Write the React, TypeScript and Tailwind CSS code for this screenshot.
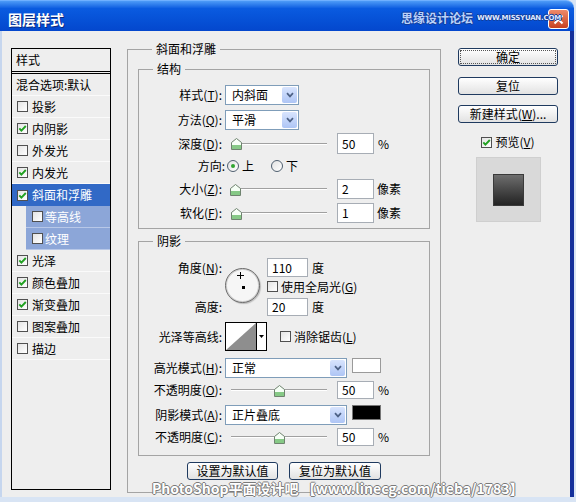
import React from "react";

type Item = { t: string; on: boolean; sel?: boolean; sub?: boolean };

const styleItems: Item[] = [
  { t: "投影", on: false },
  { t: "内阴影", on: true },
  { t: "外发光", on: false },
  { t: "内发光", on: true },
  { t: "斜面和浮雕", on: true, sel: true },
  { t: "等高线", on: false, sub: true },
  { t: "纹理", on: false, sub: true },
  { t: "光泽", on: true },
  { t: "颜色叠加", on: true },
  { t: "渐变叠加", on: true },
  { t: "图案叠加", on: false },
  { t: "描边", on: false },
];

function Check({ on }: { on?: boolean }) {
  return (
    <span className="w-[11px] h-[11px] shrink-0 border border-[#505050] bg-linear-to-br from-[#e4e4e4] to-white flex items-center justify-center">
      {on && (
        <svg width="9" height="9" viewBox="0 0 9 9">
          <path d="M1.3 4.3 L3.4 6.6 L7.8 2" stroke="#21a121" strokeWidth="1.9" fill="none" />
        </svg>
      )}
    </span>
  );
}

function Radio({ on }: { on?: boolean }) {
  return (
    <span className="w-[12px] h-[12px] shrink-0 rounded-full border border-[#4f5f6f] bg-linear-to-br from-[#e2e2e2] to-white flex items-center justify-center">
      {on && <span className="w-[4px] h-[4px] rounded-full bg-[#31a531]" />}
    </span>
  );
}

function Select({ value, w }: { value: string; w: string }) {
  return (
    <div className={`${w} h-[20px] bg-white border border-[#7f9db9] flex items-center justify-between pl-[6px] pr-[1px]`}>
      <span>{value}</span>
      <span className="w-[15px] h-[16px] rounded-[2px] bg-linear-to-b from-[#d8e4fd] to-[#aec5f5] flex items-center justify-center">
        <svg width="8" height="6" viewBox="0 0 8 6">
          <path d="M1 1.2 L4 4.4 L7 1.2" stroke="#4d6185" strokeWidth="1.7" fill="none" />
        </svg>
      </span>
    </div>
  );
}

function Field({ v, w = "w-[37px]", h = "h-[20px]" }: { v: string; w?: string; h?: string }) {
  return <div className={`${w} ${h} bg-white border border-[#a7adb5] flex items-center pl-[4px]`}>{v}</div>;
}

function Slider({ pos }: { pos: string }) {
  return (
    <div className="relative w-[100px] h-[17px] flex items-center ml-[6px]">
      <div className="ml-[3px] w-[96px] h-[2px] border-t border-[#a0a0a0] border-b border-b-white" />
      <svg className={`absolute top-[3px] ${pos}`} width="11" height="12" viewBox="0 0 11 12">
        <path d="M0.5 4.5 L5.5 0.5 L10.5 4.5 V11.5 H0.5 Z" fill="#f6fff6" stroke="#6f836f" />
        <rect x="1" y="7" width="9" height="4" fill="#86c986" />
      </svg>
    </div>
  );
}

function Btn({ children, def }: { children: React.ReactNode; def?: boolean }) {
  return (
    <div className="w-full h-[18px] rounded-[3px] border border-[#1f3a5f] bg-linear-to-b from-white to-[#e2e2e2] flex items-center justify-center p-[1px]">
      <span className={def ? "w-full h-full border border-dotted border-[#555] flex items-center justify-center" : "flex items-center justify-center"}>
        {children}
      </span>
    </div>
  );
}

function Row({ label, lw = "w-[83px]", h = "h-[20px]", mt, children }: { label: React.ReactNode; lw?: string; h?: string; mt: string; children: React.ReactNode }) {
  return (
    <div className={`flex items-center ${h} ${mt}`}>
      <span className={`${lw} text-right shrink-0`}>{label}</span>
      {children}
    </div>
  );
}

function Legend({ children }: { children: React.ReactNode }) {
  return <legend className="ml-[14px] px-[4px] leading-[16px]">{children}</legend>;
}

export default function App() {
  return (
    <div className="w-[576px] h-[502px] bg-[#d8e4f4] overflow-hidden relative font-['Noto_Sans_CJK_SC','Noto_Sans',sans-serif] text-[12px] leading-[16px] text-black">
      <div className="w-[574px] h-[497px] flex flex-col">
        {/* title bar */}
        <div className="h-[31px] shrink-0 rounded-tr-[8px] bg-linear-to-b from-[#4d9bf7] via-[#0a5be0] via-25% to-[#0447cd] border-t border-[#6fb0ff] flex items-center justify-between pl-[8px] pr-[5px]">
          <span className="text-white font-bold text-[14px] pt-[5px] [text-shadow:1px_1px_0_#0a2a80]">图层样式</span>
          <span className="w-[21px] h-[20px] mt-[6px] rounded-[3px] border border-white bg-linear-to-b from-[#ee8a6a] to-[#c8401d] flex items-center justify-center">
            <svg width="11" height="11" viewBox="0 0 11 11">
              <path d="M1.5 1.5 L9.5 9.5 M9.5 1.5 L1.5 9.5" stroke="white" strokeWidth="2" />
            </svg>
          </span>
        </div>

        {/* body */}
        <div className="flex-1 flex items-start bg-[#eeeeee] border-l-2 border-l-[#c6d6ee] border-r-4 border-r-[#15309b] pl-[9px] pt-[10px]">
          {/* left list */}
          <div className="w-[100px] h-[442px] mt-[7px] border border-black flex flex-col">
            <div className="h-[25px] border-b-[3px] border-double border-black pl-[4px] flex items-center">样式</div>
            <div className="h-[22px] pl-[4px] flex items-center border-b border-[#fafafa]">混合选项:默认</div>
            {styleItems.map((it) =>
              it.sub ? (
                <div key={it.t} className="h-[22px] pl-[14px] flex">
                  <div className="flex-1 bg-[#8ca6d8] border-b border-[#b8c8e8] flex items-center pl-[6px] gap-[2px] text-white">
                    <Check on={it.on} />
                    <span>{it.t}</span>
                  </div>
                </div>
              ) : (
                <div
                  key={it.t}
                  className={
                    it.sel
                      ? "h-[22px] pl-[5px] flex items-center gap-[4px] bg-[#3169c6] text-white"
                      : "h-[22px] pl-[5px] flex items-center gap-[4px] border-b border-[#fafafa]"
                  }
                >
                  <Check on={it.on} />
                  <span>{it.t}</span>
                </div>
              )
            )}
          </div>

          {/* main group */}
          <fieldset className="w-[314px] ml-[16px] border border-[#a4a4a4] px-[10px] pb-[12px]">
            <Legend>斜面和浮雕</Legend>

            <fieldset className="mt-[4px] border border-[#a4a4a4] pt-[8px] pb-[5px]">
              <Legend>结构</Legend>
              <Row mt="mt-0" label={<>样式(<u>T</u>):</>}>
                <span className="ml-[3px]"><Select value="内斜面" w="w-[74px]" /></span>
              </Row>
              <Row mt="mt-[5px]" label={<>方法(<u>Q</u>):</>}>
                <span className="ml-[3px]"><Select value="平滑" w="w-[74px]" /></span>
              </Row>
              <Row mt="mt-[3px]" h="h-[21px]" label={<>深度(<u>D</u>):</>}>
                <Slider pos="left-[3px]" />
                <span className="ml-[9px]"><Field v="50" h="h-[21px]" /></span>
                <span className="ml-[4px]">%</span>
              </Row>
              <Row mt="mt-[3px]" h="h-[18px]" lw="w-[86px]" label="方向:">
                <span className="ml-[2px]"><Radio on /></span>
                <span className="ml-[3px]">上</span>
                <span className="ml-[17px]"><Radio /></span>
                <span className="ml-[3px]">下</span>
              </Row>
              <Row mt="mt-[4px]" label={<>大小(<u>Z</u>):</>}>
                <Slider pos="left-[2px]" />
                <span className="ml-[9px]"><Field v="2" /></span>
                <span className="ml-[3px]">像素</span>
              </Row>
              <Row mt="mt-[4px]" label={<>软化(<u>F</u>):</>}>
                <Slider pos="left-[3px]" />
                <span className="ml-[9px]"><Field v="1" /></span>
                <span className="ml-[3px]">像素</span>
              </Row>
            </fieldset>

            <fieldset className="mt-[4px] border border-[#a4a4a4] pb-[9px]">
              <Legend>阴影</Legend>
              <div className="flex mt-[9px] h-[58px]">
                <div className="w-[83px] shrink-0 flex flex-col justify-between text-right pt-[2px] pb-[1px]">
                  <span>角度(<u>N</u>):</span>
                  <span>高度:</span>
                </div>
                <div className="ml-[3px] mt-[10px] relative w-[35px] h-[35px] rounded-full border border-[#6a6a6a] bg-[#f6f6f6] shadow-[inset_0_0_0_1px_#cfcfcf,1px_1px_1px_#bbb]">
                  <svg className="absolute left-[11px] top-[3px]" width="7" height="7" viewBox="0 0 7 7">
                    <path d="M3.5 0 V7 M0 3.5 H7" stroke="#000" strokeWidth="1" />
                  </svg>
                  <span className="absolute left-[16px] top-[17px] w-[3px] h-[3px] bg-black" />
                </div>
                <div className="ml-[7px] flex flex-col">
                  <div className="flex items-center">
                    <Field v="110" w="w-[41px]" h="h-[19px]" />
                    <span className="ml-[4px]">度</span>
                  </div>
                  <div className="flex items-center mt-[3px] h-[13px] gap-[3px]">
                    <Check />
                    <span>使用全局光(<u>G</u>)</span>
                  </div>
                  <div className="flex items-center mt-[5px]">
                    <Field v="20" w="w-[41px]" h="h-[18px]" />
                    <span className="ml-[4px]">度</span>
                  </div>
                </div>
              </div>

              <Row mt="mt-[6px]" h="h-[29px]" label="光泽等高线:">
                <div className="ml-[3px] w-[42px] h-[29px] border border-black bg-white flex">
                  <div className="w-[31px] h-full border-r border-black">
                    <svg width="30" height="27" viewBox="0 0 30 27">
                      <path d="M0 27 L30 0 L30 27 Z" fill="#8e8e8e" />
                    </svg>
                  </div>
                  <div className="flex-1 flex items-center justify-center">
                    <svg width="5" height="3" viewBox="0 0 5 3">
                      <path d="M0 0 H5 L2.5 3 Z" fill="#000" />
                    </svg>
                  </div>
                </div>
                <span className="ml-[13px] flex items-center gap-[3px]">
                  <Check />
                  <span>消除锯齿(<u>L</u>)</span>
                </span>
              </Row>

              <Row mt="mt-[7px]" label={<>高光模式(<u>H</u>):</>}>
                <span className="ml-[3px]"><Select value="正常" w="w-[122px]" /></span>
                <span className="ml-[5px] self-start w-[29px] h-[15px] bg-white border border-[#9a9a9a]" />
              </Row>
              <Row mt="mt-[3px]" h="h-[18px]" label={<>不透明度(<u>O</u>):</>}>
                <Slider pos="left-[46px]" />
                <span className="ml-[9px]"><Field v="50" h="h-[18px]" /></span>
                <span className="ml-[4px]">%</span>
              </Row>
              <Row mt="mt-[5px]" h="h-[21px]" label={<>阴影模式(<u>A</u>):</>}>
                <span className="ml-[3px]"><Select value="正片叠底" w="w-[122px]" /></span>
                <span className="ml-[5px] self-start mt-[1px] w-[29px] h-[15px] bg-black border border-[#777]" />
              </Row>
              <Row mt="mt-[3px]" h="h-[18px]" label={<>不透明度(<u>C</u>):</>}>
                <Slider pos="left-[46px]" />
                <span className="ml-[9px]"><Field v="50" h="h-[18px]" /></span>
                <span className="ml-[4px]">%</span>
              </Row>
            </fieldset>

            <div className="flex justify-center gap-[11px] mt-[6px]">
              <div className="w-[91px]"><Btn>设置为默认值</Btn></div>
              <div className="w-[92px]"><Btn>复位为默认值</Btn></div>
            </div>
          </fieldset>

          {/* right column */}
          <div className="w-[100px] ml-[17px] mt-[7px] flex flex-col items-center">
            <Btn def>确定</Btn>
            <div className="w-full mt-[11px]"><Btn>复位</Btn></div>
            <div className="w-full mt-[10px]"><Btn>新建样式(<u>W</u>)...</Btn></div>
            <div className="mt-[11px] flex items-center gap-[3px]">
              <Check on />
              <span>预览(<u>V</u>)</span>
            </div>
            <div className="mt-[7px] w-[65px] h-[65px] bg-[#d9d9d9] border border-[#cfcfcf] flex items-center justify-center">
              <div className="w-[31px] h-[32px] bg-linear-to-b from-[#6e6e6e] to-[#242424] border border-[#3a3a3a]" />
            </div>
          </div>
        </div>
      </div>

      {/* watermarks */}
      <div className="absolute left-[401px] top-[10px] flex items-center gap-[4px] whitespace-nowrap pointer-events-none">
        <span className="text-[12px] font-bold text-[#b9d2fa] [text-shadow:1px_0_#123c9a,-1px_0_#123c9a,0_1px_#123c9a,0_-1px_#123c9a]">思缘设计论坛</span>
        <span className="text-[7px] font-bold text-[#dde8ff] tracking-[-0.2px] font-['DejaVu_Sans',sans-serif] [text-shadow:1px_0_#123c9a,-1px_0_#123c9a,0_1px_#123c9a,0_-1px_#123c9a]">WWW.MISSYUAN.COM</span>
      </div>
      <div className="absolute left-[152px] top-[482px] pointer-events-none text-[14px] leading-[13px] font-bold text-white whitespace-nowrap [text-shadow:1px_0_#7a7a7a,-1px_0_#7a7a7a,0_1px_#7a7a7a,0_-1px_#7a7a7a]">
        PhotoShop平面设计吧 【www.linecg.com/tieba/1783】
      </div>
    </div>
  );
}
